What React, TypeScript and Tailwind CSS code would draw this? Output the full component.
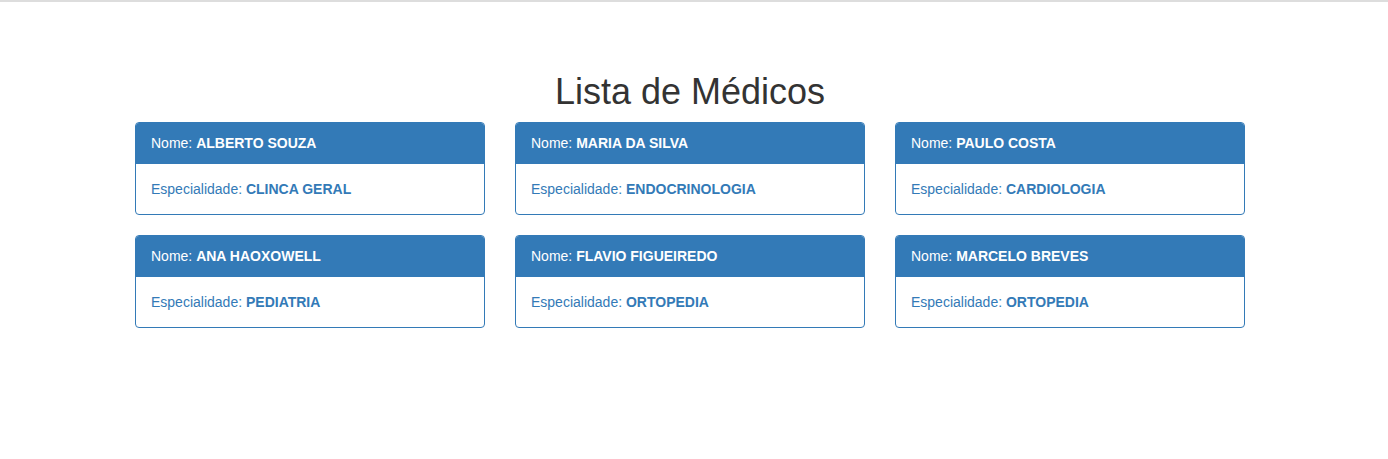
type Medico = {
  nome: string;
  especialidade: string;
};

const medicos: Medico[] = [
  { nome: "ALBERTO SOUZA", especialidade: "CLINCA GERAL" },
  { nome: "MARIA DA SILVA", especialidade: "ENDOCRINOLOGIA" },
  { nome: "PAULO COSTA", especialidade: "CARDIOLOGIA" },
  { nome: "ANA HAOXOWELL", especialidade: "PEDIATRIA" },
  { nome: "FLAVIO FIGUEIREDO", especialidade: "ORTOPEDIA" },
  { nome: "MARCELO BREVES", especialidade: "ORTOPEDIA" },
];

function MedicoCard({ medico }: { medico: Medico }) {
  return (
    <div className="rounded-[4px] border border-[#337ab7] bg-white">
      <div className="rounded-t-[3px] border-b border-[#337ab7] bg-[#337ab7] px-[15px] py-[10px] text-[14px] leading-[20px] text-white">
        Nome: <b>{medico.nome}</b>
      </div>
      <div className="p-[15px] text-[14px] leading-[20px] text-[#337ab7]">
        Especialidade: <b>{medico.especialidade}</b>
      </div>
    </div>
  );
}

export default function App() {
  return (
    <div className="min-h-[459px] border-t-2 border-[#dddddd] bg-white font-['Liberation_Sans',Arial,sans-serif] text-[#333]">
      <div className="ml-[135px] w-[1110px] pt-[70px]">
        <h1 className="mb-[10px] text-center text-[36px] leading-[1.1] font-normal text-[#333]">
          Lista de Médicos
        </h1>
        <div className="grid grid-cols-3 gap-x-[30px] gap-y-[20px]">
          {medicos.map((m) => (
            <MedicoCard key={m.nome} medico={m} />
          ))}
        </div>
      </div>
    </div>
  );
}
